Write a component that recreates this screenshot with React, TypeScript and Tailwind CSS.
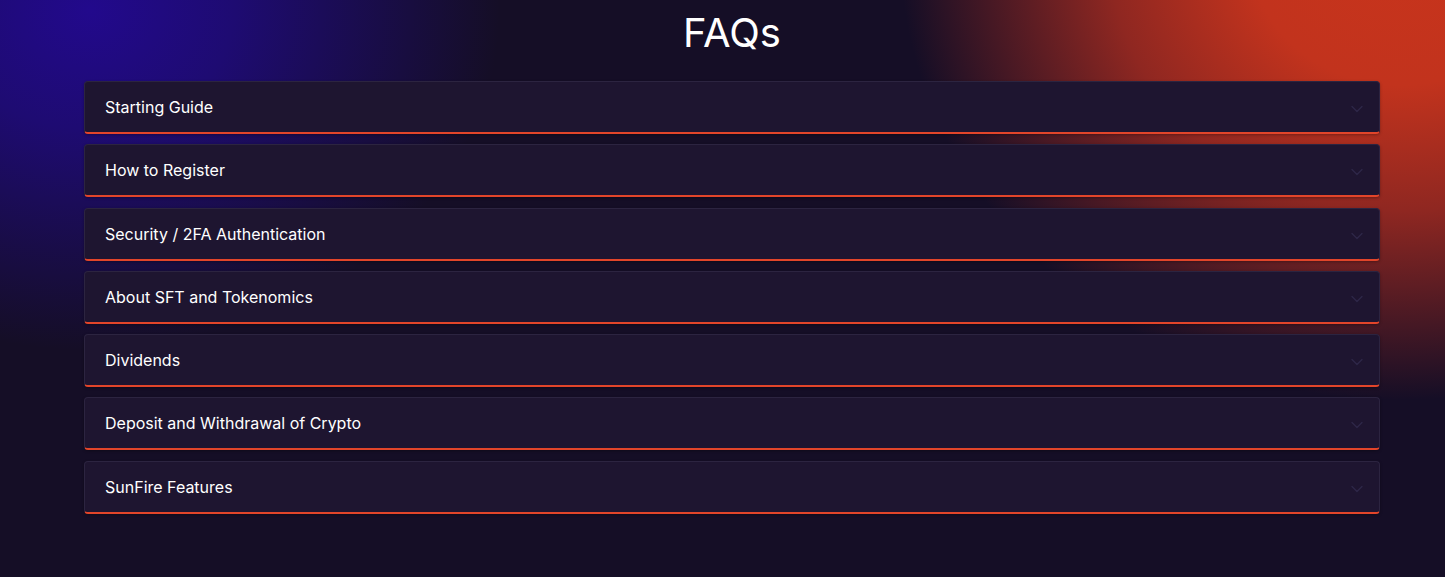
import { ChevronDown } from "lucide-react";

const questions = [
  "Starting Guide",
  "How to Register",
  "Security / 2FA Authentication",
  "About SFT and Tokenomics",
  "Dividends",
  "Deposit and Withdrawal of Crypto",
  "SunFire Features",
];

export default function App() {
  return (
    <div className="relative min-h-[577px] w-full overflow-hidden bg-[#150e26] font-['Inter','Liberation_Sans',sans-serif]">
      {/* background glows */}
      <div className="pointer-events-none absolute -left-[320px] -top-[330px] h-[680px] w-[820px] rounded-full bg-[radial-gradient(closest-side,#22098c_0%,#1e0b72_35%,rgba(21,14,38,0)_100%)]" />
      <div className="pointer-events-none absolute -right-[455px] -top-[500px] h-[900px] w-[1000px] rounded-full bg-[radial-gradient(closest-side,#c8341c_0%,#c2331d_30%,#8f2721_58%,rgba(21,14,38,0)_100%)]" />

      <section className="relative ml-[84px] w-[1296px] pb-[64px] pt-[9px]">
        <h2 className="mb-[24px] text-center text-[40px] leading-[48px] font-normal text-white">FAQs</h2>
        <div className="flex flex-col gap-[10.3px]">
          {questions.map((q) => (
            <div
              key={q}
              className="flex h-[53px] items-center justify-between rounded-[4px] border border-b-2 border-[#2c2440] border-b-[#e2452a] bg-[#1e1530] pl-[20px] pr-[12px] shadow-[0_1px_3px_rgba(0,0,0,0.3)]"
            >
              <span className="text-[16px] text-white">{q}</span>
              <ChevronDown className="mt-[4px] h-[20px] w-[20px] text-[#2e2748]" strokeWidth={1.5} />
            </div>
          ))}
        </div>
      </section>
    </div>
  );
}
